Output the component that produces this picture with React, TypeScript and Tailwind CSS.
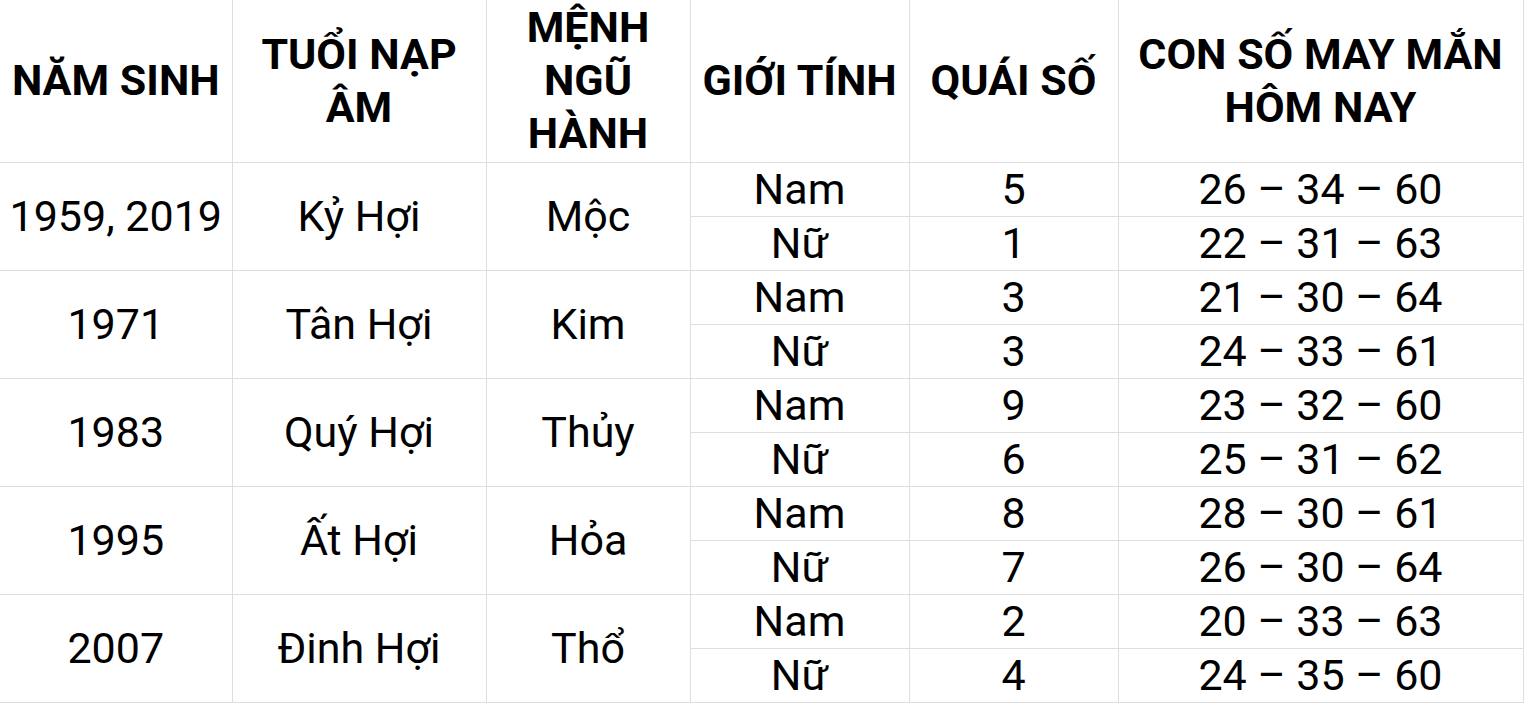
const rows = [
  { year: "1959, 2019", age: "Kỷ Hợi", menh: "Mộc", nam: ["5", "26 – 34 – 60"], nu: ["1", "22 – 31 – 63"] },
  { year: "1971", age: "Tân Hợi", menh: "Kim", nam: ["3", "21 – 30 – 64"], nu: ["3", "24 – 33 – 61"] },
  { year: "1983", age: "Quý Hợi", menh: "Thủy", nam: ["9", "23 – 32 – 60"], nu: ["6", "25 – 31 – 62"] },
  { year: "1995", age: "Ất Hợi", menh: "Hỏa", nam: ["8", "28 – 30 – 61"], nu: ["7", "26 – 30 – 64"] },
  { year: "2007", age: "Đinh Hợi", menh: "Thổ", nam: ["2", "20 – 33 – 63"], nu: ["4", "24 – 35 – 60"] },
];

const th = "border-r border-b border-[#dedede] font-bold text-center align-middle leading-[53px] p-0";
const td = "border-r border-b border-[#dedede] text-center align-middle h-[54px] leading-[52px] p-0";

export default function App() {
  return (
    <div className="bg-white min-h-screen text-black" style={{ fontFamily: "Roboto, 'Liberation Sans', sans-serif" }}>
      <table className="border-collapse table-fixed w-[1523px] text-[43px]">
        <colgroup>
          <col className="w-[232px]" />
          <col className="w-[254px]" />
          <col className="w-[204px]" />
          <col className="w-[219px]" />
          <col className="w-[209px]" />
          <col className="w-[405px]" />
        </colgroup>
        <thead>
          <tr className="h-[162px]">
            <th className={th}>NĂM SINH</th>
            <th className={th}>TUỔI NẠP<br />ÂM</th>
            <th className={th}>MỆNH<br />NGŨ<br />HÀNH</th>
            <th className={th}>GIỚI TÍNH</th>
            <th className={th}>QUÁI SỐ</th>
            <th className={th}>CON SỐ MAY MẮN<br />HÔM NAY</th>
          </tr>
        </thead>
        <tbody>
          {rows.map((r) => (
            <>
              <tr key={r.year + "a"}>
                <td className={td} rowSpan={2}>{r.year}</td>
                <td className={td} rowSpan={2}>{r.age}</td>
                <td className={td} rowSpan={2}>{r.menh}</td>
                <td className={td}>Nam</td>
                <td className={td}>{r.nam[0]}</td>
                <td className={td}>{r.nam[1]}</td>
              </tr>
              <tr key={r.year + "b"}>
                <td className={td}>Nữ</td>
                <td className={td}>{r.nu[0]}</td>
                <td className={td}>{r.nu[1]}</td>
              </tr>
            </>
          ))}
        </tbody>
      </table>
    </div>
  );
}
